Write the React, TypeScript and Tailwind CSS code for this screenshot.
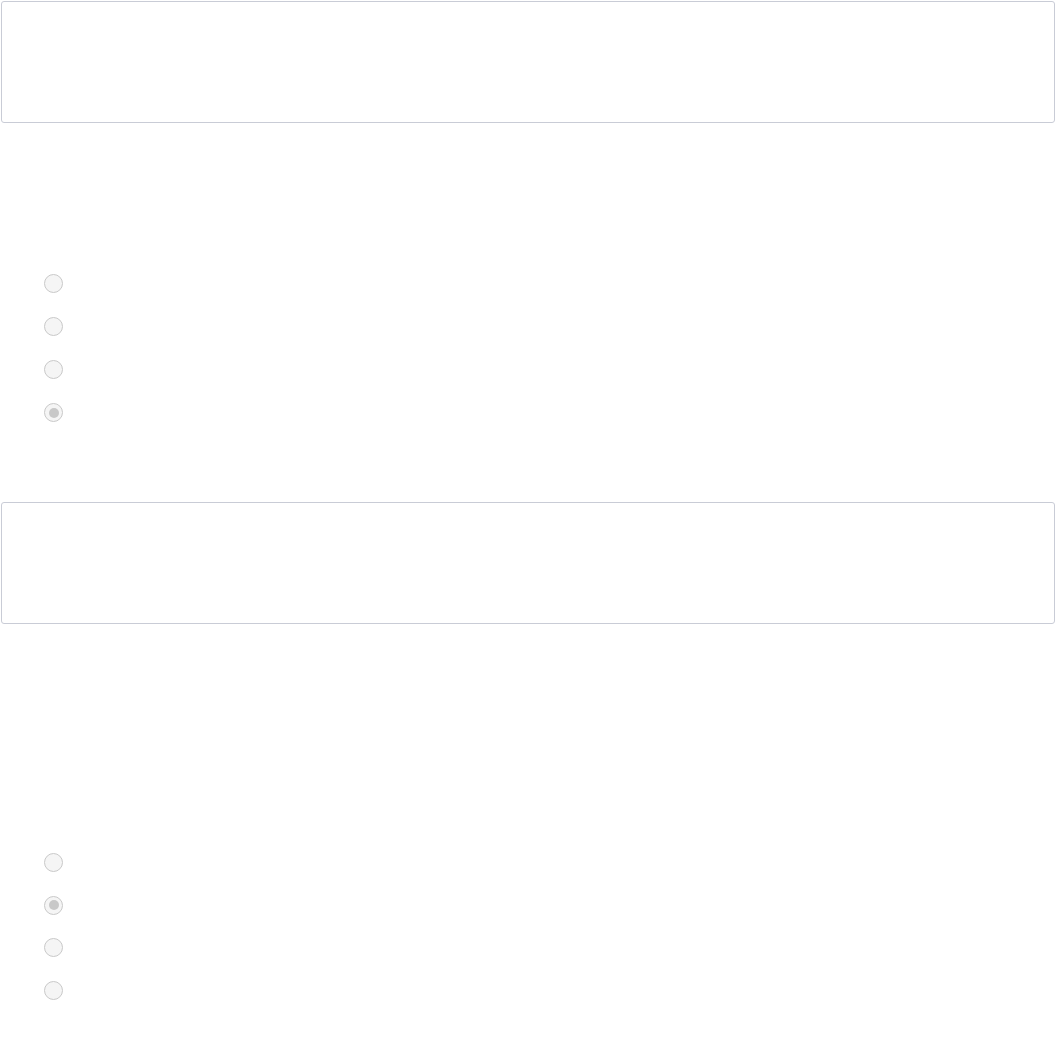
const Radio = ({ checked = false }: { checked?: boolean }) => (
  <span className="flex h-[19px] w-[19px] items-center justify-center rounded-full border-[1.5px] border-[#c9c9c9] bg-[#f5f5f5]">
    {checked && <span className="h-[10px] w-[10px] rounded-full bg-[#c8c8c8]" />}
  </span>
);

const Box = () => (
  <div className="h-[122px] rounded-[3px] border border-[#c9ccd6] bg-white" />
);

export default function App() {
  const first = [false, false, false, true];
  const second = [false, true, false, false];

  return (
    <div className="min-h-screen bg-white p-px font-['Liberation_Sans',sans-serif]">
      <Box />

      <div className="mt-[151px] flex flex-col gap-[24px] pl-[43px]">
        {first.map((c, i) => (
          <Radio key={i} checked={c} />
        ))}
      </div>

      <div className="mt-[80px]">
        <Box />
      </div>

      <div className="mt-[229px] flex flex-col gap-[23.67px] pl-[43px]">
        {second.map((c, i) => (
          <Radio key={i} checked={c} />
        ))}
      </div>
    </div>
  );
}
